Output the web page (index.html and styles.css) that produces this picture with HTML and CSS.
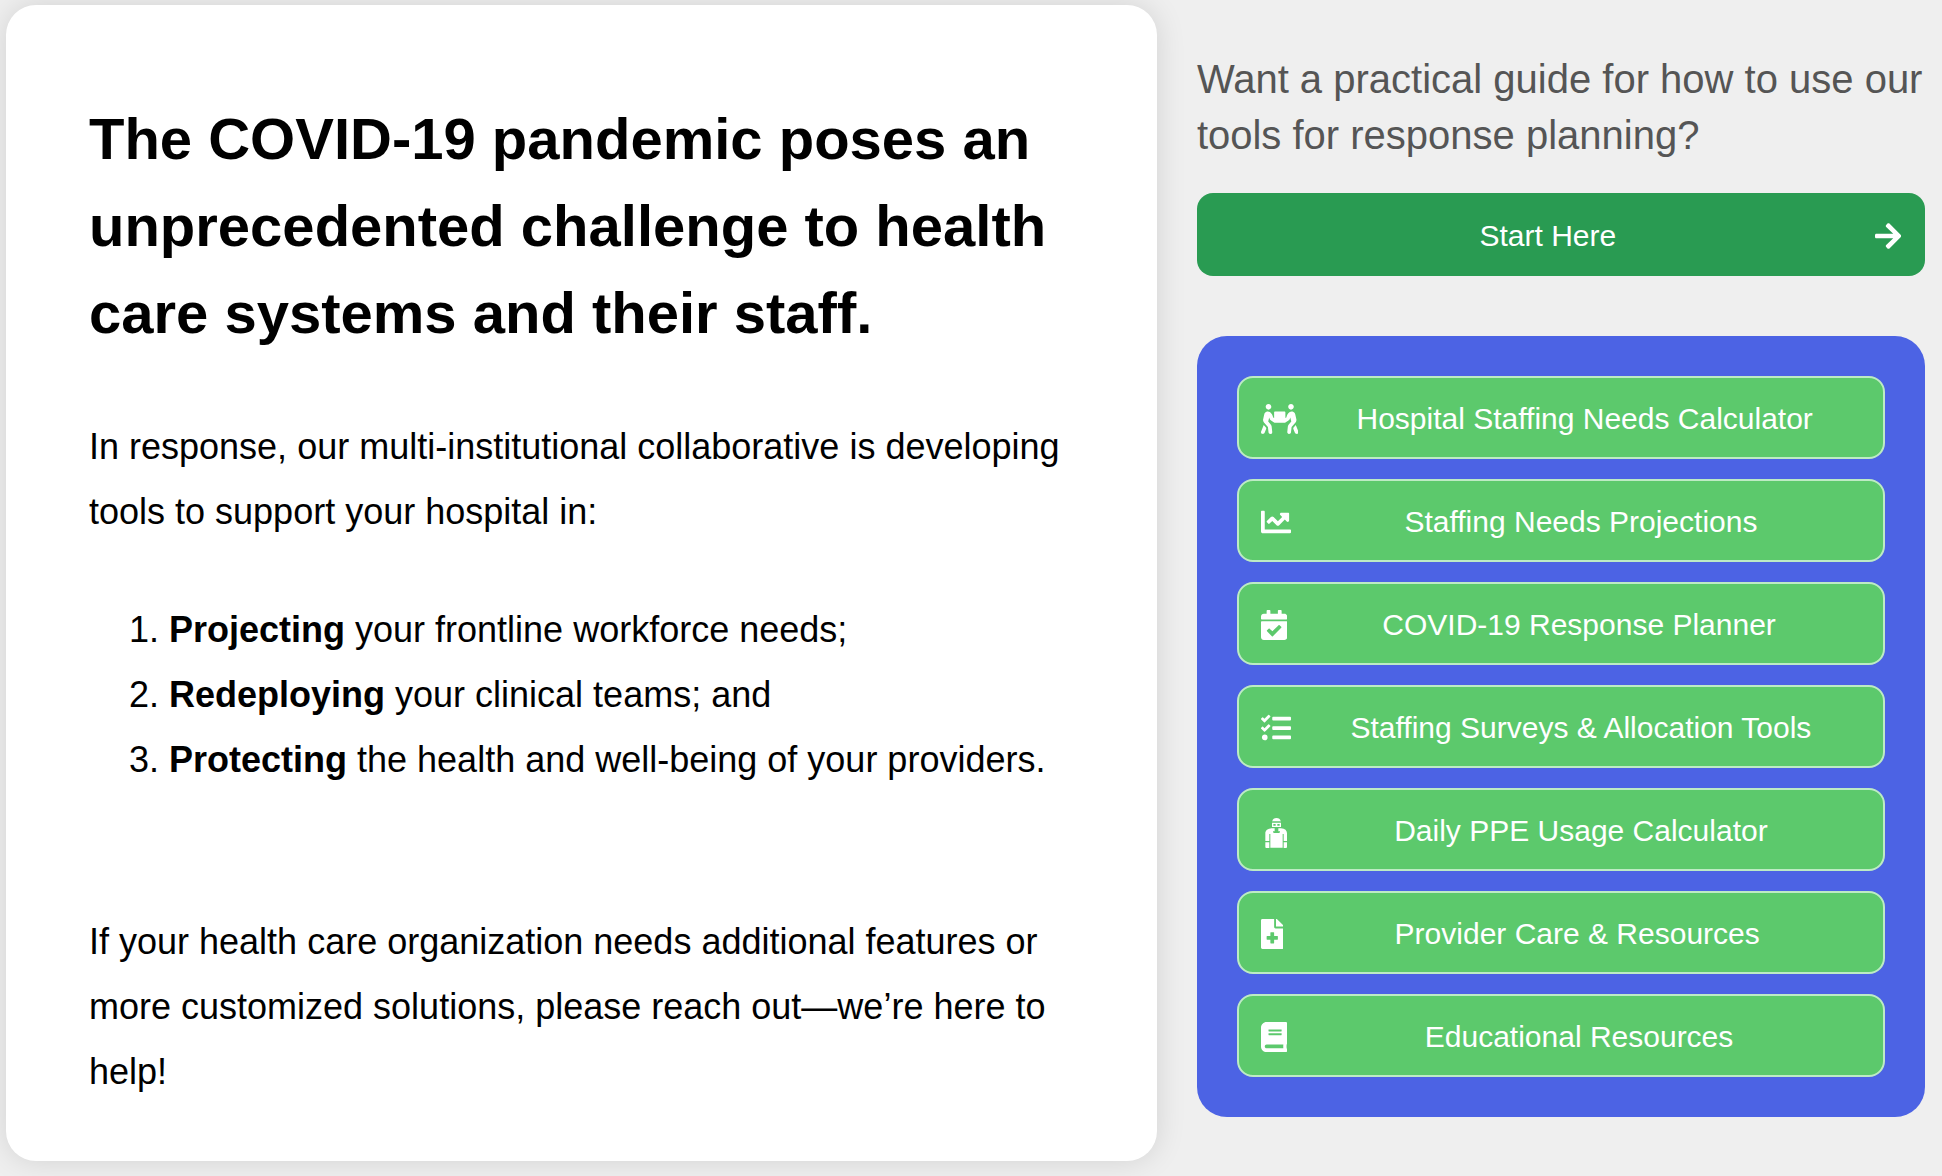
FILE: index.html
```html
<!DOCTYPE html>
<html lang="en">
<head>
<meta charset="utf-8">
<meta name="viewport" content="width=device-width, initial-scale=1">
<title>COVID-19 Staffing Tools</title>
<link rel="stylesheet" href="styles.css">
</head>
<body>
<main class="page">
  <article class="card">
    <h1 class="card-title">The COVID-19 pandemic poses an unprecedented challenge to health care systems and their staff.</h1>
    <p class="card-text">In response, our multi-institutional collaborative is developing tools to support your hospital in:</p>
    <ol class="goals">
      <li><strong>Projecting</strong> your frontline workforce needs;</li>
      <li><strong>Redeploying</strong> your clinical teams; and</li>
      <li><strong>Protecting</strong> the health and well-being of your providers.</li>
    </ol>
    <p class="card-text">If your health care organization needs additional features or more customized solutions, please reach out—we’re here to help!</p>
  </article>

  <aside class="side">
    <h2 class="side-title">Want a practical guide for how to use our tools for response planning?</h2>
    <a class="btn btn-start" href="#start">
      <span class="label">Start Here</span>
      <svg class="icon" viewBox="0 0 448 512" aria-hidden="true"><path d="M190.500 66.900l22.200-22.200c9.400-9.400 24.600-9.400 33.900 0L441 239c9.400 9.400 9.400 24.600 0 33.900L246.600 467.300c-9.400 9.400-24.600 9.400-33.900 0l-22.200-22.200c-9.500-9.500-9.300-25 .4-34.300L311.400 296H24c-13.300 0-24-10.700-24-24v-32c0-13.300 10.700-24 24-24h287.400L190.900 101.200c-9.800-9.300-10-24.800-.4-34.300z"/></svg>
    </a>
    <nav class="tools" aria-label="Tools">
      <a class="btn btn-tool" href="#calculator">
        <svg class="icon" viewBox="0 0 640 512" aria-hidden="true"><path d="M128 96c26.500 0 48-21.500 48-48S154.500 0 128 0 80 21.500 80 48s21.500 48 48 48zm384 0c26.500 0 48-21.500 48-48S538.500 0 512 0s-48 21.500-48 48 21.500 48 48 48zm125.700 372.100l-44-110-41.100 46.400-2 18.200 27.700 69.200c5 12.500 17 20.100 29.700 20.100 4 0 8-.7 11.900-2.300 16.400-6.600 24.400-25.200 17.800-41.600zm-34.200-209.800L585 178.100c-4.600-20-18.600-36.800-37.500-44.900-18.500-8-39-6.700-56.100 3.300-22.700 13.400-39.700 34.500-48.100 59.400L432 229.800 416 240v-96c0-8.800-7.200-16-16-16H240c-8.800 0-16 7.200-16 16v96l-16.100-10.200-11.300-33.900c-8.300-25-25.400-46-48.100-59.400-17.200-10-37.600-11.300-56.100-3.300-18.900 8.100-32.900 24.900-37.500 44.900l-18.400 80.200c-4.600 20 .7 41.200 14.400 56.700l67.200 75.900 10.100 92.600C130 499.800 143.800 512 160 512c1.200 0 2.300-.1 3.500-.2 17.600-1.900 30.200-17.700 28.300-35.300l-10.100-92.800c-1.500-13-6.900-25.100-15.600-35l-43.300-49 17.600-70.300 6.800 20.400c4.100 12.500 11.900 23.400 24.500 32.600l51.100 32.500c4.600 2.900 12.100 4.600 17.200 5h160c5.100-.4 12.600-2.100 17.200-5l51.100-32.500c12.600-9.200 20.400-20 24.500-32.600l6.800-20.400 17.600 70.300-43.300 49c-8.700 9.900-14.100 22-15.600 35l-10.100 92.800c-1.900 17.600 10.800 33.400 28.300 35.300 1.200.1 2.300.2 3.500.2 16.100 0 30-12.100 31.800-28.300l10.100-92.600 67.200-75.900c13.600-15.500 19-36.700 14.400-56.700zM46.300 358.100l-44 110c-6.600 16.400 1.400 35 17.800 41.600 16.800 6.600 35.100-1.700 41.600-17.800l27.700-69.200-2-18.200-41.100-46.400z"/></svg>
        <span class="label">Hospital Staffing Needs Calculator</span>
      </a>
      <a class="btn btn-tool" href="#projections">
        <svg class="icon" viewBox="0 0 512 512" aria-hidden="true"><path d="M496 384H64V80c0-8.840-7.160-16-16-16H16C7.160 64 0 71.160 0 80v336c0 17.670 14.330 32 32 32h464c8.840 0 16-7.160 16-16v-32c0-8.840-7.160-16-16-16zM464 96H345.940c-21.380 0-32.090 25.850-16.970 40.970l32.400 32.400L288 242.750l-73.370-73.370c-12.500-12.500-32.760-12.500-45.250 0l-68.690 68.690c-6.250 6.250-6.250 16.380 0 22.630l22.620 22.620c6.250 6.250 16.380 6.250 22.630 0L192 237.250l73.370 73.370c12.500 12.500 32.760 12.500 45.250 0l96-96 32.400 32.400c15.120 15.120 40.970 4.410 40.970-16.970V112c.01-8.840-7.150-16-15.990-16z"/></svg>
        <span class="label">Staffing Needs Projections</span>
      </a>
      <a class="btn btn-tool" href="#planner">
        <svg class="icon" viewBox="0 0 448 512" aria-hidden="true"><path d="M436 160H12c-6.627 0-12-5.373-12-12v-36c0-26.510 21.490-48 48-48h48V12c0-6.627 5.373-12 12-12h40c6.627 0 12 5.373 12 12v52h128V12c0-6.627 5.373-12 12-12h40c6.627 0 12 5.373 12 12v52h48c26.510 0 48 21.490 48 48v36c0 6.627-5.373 12-12 12zM12 192h424c6.627 0 12 5.373 12 12v260c0 26.510-21.490 48-48 48H48c-26.510 0-48-21.490-48-48V204c0-6.627 5.373-12 12-12zm333.296 95.947l-28.169-28.398c-4.667-4.705-12.265-4.736-16.970-.068L194.120 364.665l-45.980-46.352c-4.667-4.705-12.266-4.736-16.971-.068l-28.397 28.170c-4.705 4.667-4.736 12.265-.068 16.970l82.601 83.269c4.667 4.705 12.265 4.736 16.970.068l142.953-141.805c4.705-4.667 4.736-12.265.068-16.970z"/></svg>
        <span class="label">COVID-19 Response Planner</span>
      </a>
      <a class="btn btn-tool" href="#surveys">
        <svg class="icon" viewBox="0 0 512 512" aria-hidden="true"><path d="M139.610 35.500a12 12 0 0 0-17 0L58.930 98.810l-22.700-22.120a12 12 0 0 0-17 0L3.530 92.410a12 12 0 0 0 0 17l47.590 47.400a12.780 12.780 0 0 0 17.610 0l15.590-15.620L156.520 69a12.090 12.090 0 0 0 .09-17zm0 159.190a12 12 0 0 0-17 0l-63.680 63.720-22.700-22.100a12 12 0 0 0-17 0L3.530 252a12 12 0 0 0 0 17L51 316.500a12.770 12.770 0 0 0 17.600 0l15.700-15.690 72.200-72.220a12 12 0 0 0 .09-16.900zM64 368c-26.490 0-48.590 21.500-48.590 48S37.530 464 64 464a48 48 0 0 0 0-96zm432 16H208a16 16 0 0 0-16 16v32a16 16 0 0 0 16 16h288a16 16 0 0 0 16-16v-32a16 16 0 0 0-16-16zm0-320H208a16 16 0 0 0-16 16v32a16 16 0 0 0 16 16h288a16 16 0 0 0 16-16V80a16 16 0 0 0-16-16zm0 160H208a16 16 0 0 0-16 16v32a16 16 0 0 0 16 16h288a16 16 0 0 0 16-16v-32a16 16 0 0 0-16-16z"/></svg>
        <span class="label">Staffing Surveys &amp; Allocation Tools</span>
      </a>
      <a class="btn btn-tool" href="#ppe">
        <svg class="icon icon-ppe" viewBox="0 -6 90 90" aria-hidden="true"><path fill-rule="evenodd" d="M34 9C35 3 40 0 46.500 0S58 3 59 9zM33 11H60V13H33zM33 15H60V27H33zM37 18V23H44V18zM49 18V23H56V18zM33 31H41V40H36V43L39 45H54L57 43V40H52V31H60C72 32 78 38 78 46V69H68V48H65V89H28V48H25V69H13V46C13 38 20 32 33 31zM13 73H25V90H16Q13 90 13 87zM68 73H78V87Q78 90 75 90H68z"/></svg>
        <span class="label">Daily PPE Usage Calculator</span>
      </a>
      <a class="btn btn-tool" href="#care">
        <svg class="icon" viewBox="0 0 384 512" aria-hidden="true"><path d="M377 105L279.100 7c-4.500-4.500-10.600-7-17-7H256v128h128v-6.100c0-6.300-2.500-12.400-7-16.900zM224 136V0H24C10.700 0 0 10.700 0 24v464c0 13.300 10.700 24 24 24h336c13.300 0 24-10.700 24-24V160H248c-13.200 0-24-10.800-24-24zm64 160v48c0 4.400-3.600 8-8 8h-56v56c0 4.400-3.600 8-8 8h-48c-4.400 0-8-3.600-8-8v-56h-56c-4.400 0-8-3.600-8-8v-48c0-4.400 3.600-8 8-8h56v-56c0-4.400 3.600-8 8-8h48c4.400 0 8 3.600 8 8v56h56c4.400 0 8 3.600 8 8z"/></svg>
        <span class="label">Provider Care &amp; Resources</span>
      </a>
      <a class="btn btn-tool" href="#education">
        <svg class="icon" viewBox="0 0 448 512" aria-hidden="true"><path d="M448 360V24c0-13.300-10.700-24-24-24H96C43 0 0 43 0 96v320c0 53 43 96 96 96h328c13.300 0 24-10.700 24-24v-16c0-7.500-3.500-14.300-8.900-18.700-4.200-15.400-4.200-59.300 0-74.700 5.400-4.300 8.900-11.100 8.900-18.600zM128 134c0-3.300 2.700-6 6-6h212c3.300 0 6 2.700 6 6v20c0 3.300-2.700 6-6 6H134c-3.300 0-6-2.700-6-6v-20zm0 64c0-3.300 2.700-6 6-6h212c3.300 0 6 2.700 6 6v20c0 3.300-2.700 6-6 6H134c-3.300 0-6-2.700-6-6v-20zm253.400 250H96c-17.700 0-32-14.300-32-32 0-17.600 14.400-32 32-32h285.400c-1.900 17.100-1.900 46.900 0 64z"/></svg>
        <span class="label">Educational Resources</span>
      </a>
    </nav>
  </aside>
</main>
</body>
</html>
```
FILE: styles.css
```css
* {
  box-sizing: border-box;
}

body {
  margin: 0;
  background: #efefef;
  color: #000;
  font-family: Helvetica, Arial, "Liberation Sans", sans-serif;
}

.page {
  display: grid;
  grid-template-columns: minmax(0, 49fr) minmax(0, 31fr);
  align-items: start;
  gap: 40px;
  padding: 5px 17px 15px 6px;
}

.card {
  padding: 90px 80px 57px 83px;
  border-radius: 30px;
  background: #fff;
  box-shadow: 0 0 30px rgba(0, 0, 0, 0.12);
}

.card-title {
  margin: 0 0 58px;
  font-size: 58px;
  line-height: 87px;
}

.card-text {
  margin: 0;
  font-size: 36px;
  line-height: 65px;
}

.goals {
  margin: 53px 0 117px;
  padding-left: 80px;
  font-size: 36px;
  line-height: 65px;
}

.side {
  padding-top: 46px;
}

.side-title {
  margin: 0 0 30px;
  color: #555;
  font-size: 40px;
  font-weight: 400;
  line-height: 56px;
}

.btn {
  display: flex;
  align-items: center;
  min-height: 83px;
  padding: 2px 24px 0;
  border-radius: 16px;
  color: #fff;
  font-size: 30px;
  line-height: 40px;
  text-decoration: none;
}

.label {
  flex: 1;
  text-align: center;
}

.icon {
  flex: none;
  height: 30px;
  fill: currentColor;
}

.icon-ppe {
  overflow: visible;
}

.btn-start {
  background: #299b52;
}

.tools {
  display: grid;
  gap: 20px;
  margin-top: 60px;
  padding: 40px;
  border-radius: 30px;
  background: #4c63e4;
}

.btn-tool {
  gap: 10px;
  padding: 2px 22px 0;
  border: 2px solid #bdebc4;
  background: #5cc96c;
}
```
